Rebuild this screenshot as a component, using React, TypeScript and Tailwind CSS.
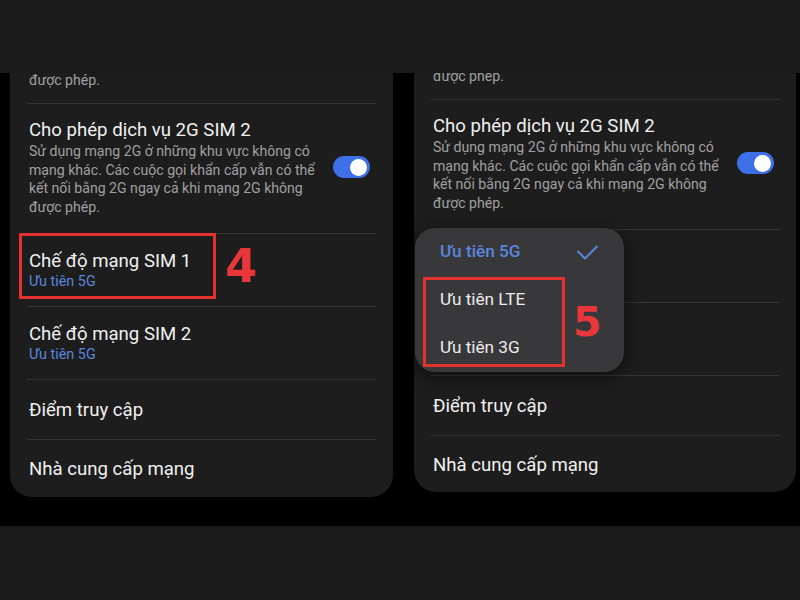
import React from "react";

function Divider() {
  return <div className="mx-[17px] h-px bg-[#353535]" />;
}

function Card({ shift, height, right }: { shift: string; height: string; right?: boolean }) {
  return (
    <div className={`relative overflow-hidden rounded-b-[22px] bg-[#1d1d1d] ${height} ${right ? "w-[382px]" : "w-[383px]"}`}>
      <div className={`${shift} h-[32px] pl-[19px] text-[14.1px] leading-[19px] text-[#a0a0a0]`}>được phép.</div>
      <Divider />
      <div className={`flex items-center pl-[19px] pt-[14px] pb-[16px] ${right ? "pr-[22px]" : "pr-[23px]"}`}>
        <div className="flex-1">
          <div className="text-[18.6px] leading-[24px] text-[#f0f0f0]">Cho phép dịch vụ 2G SIM 2</div>
          <div className="text-[14.1px] leading-[18.7px] text-[#a0a0a0] whitespace-nowrap">
            Sử dụng mạng 2G ở những khu vực không có
            <br />
            mạng khác. Các cuộc gọi khẩn cấp vẫn có thể
            <br />
            kết nối bằng 2G ngay cả khi mạng 2G không
            <br />
            được phép.
          </div>
        </div>
        <div className="flex h-[22px] w-[37px] items-center justify-end rounded-full bg-[#3d6fe6] pr-[3px]">
          <div className="h-[17px] w-[17px] rounded-full bg-white" />
        </div>
      </div>
      <Divider />
      <div className="pl-[19px] pt-[15px] pb-[15px]">
        <div className="text-[18.6px] leading-[24px] text-[#f0f0f0]">Chế độ mạng SIM 1</div>
        <div className="text-[14.4px] leading-[18px] text-[#5a86de]">Ưu tiên 5G</div>
      </div>
      <Divider />
      <div className="pl-[19px] pt-[15px] pb-[15px]">
        <div className="text-[18.6px] leading-[24px] text-[#f0f0f0]">Chế độ mạng SIM 2</div>
        <div className="text-[14.4px] leading-[18px] text-[#5a86de]">Ưu tiên 5G</div>
      </div>
      <Divider />
      <div className="pl-[19px] pt-[18px] pb-[17px]">
        <div className="text-[18.6px] leading-[24px] text-[#f0f0f0]">Điểm truy cập</div>
      </div>
      <Divider />
      <div className="pl-[19px] pt-[17px]">
        <div className="text-[18.6px] leading-[24px] text-[#f0f0f0]">Nhà cung cấp mạng</div>
      </div>

      {!right && (
        <>
          <div className="absolute left-[9px] top-[160px] h-[66px] w-[197px] border-[3px] border-[#e3312f]" />
          <div className="absolute left-[215px] top-[170px] font-['DejaVu_Sans',sans-serif] text-[46px] font-bold leading-none text-[#e8363a]">
            4
          </div>
        </>
      )}

      {right && (
        <>
          <div className="absolute left-[1px] top-[155px] h-[144px] w-[209px] rounded-[20px] bg-[#38383b] shadow-[0_4px_18px_rgba(0,0,0,0.55)]">
            <div className="flex h-[48px] items-center justify-between pl-[25px] pr-[26px]">
              <span className="text-[17.2px] font-medium text-[#5a86de]">Ưu tiên 5G</span>
              <svg width="21" height="15" viewBox="0 0 21 15" fill="none">
                <polyline points="1,6.5 8,13.5 20,1.5" stroke="#5a86de" strokeWidth="2" strokeLinecap="round" strokeLinejoin="round" />
              </svg>
            </div>
            <div className="flex h-[48px] items-center pl-[25px]">
              <span className="text-[17.2px] text-[#ececec]">Ưu tiên LTE</span>
            </div>
            <div className="flex h-[48px] items-center pl-[25px]">
              <span className="text-[17.2px] text-[#ececec]">Ưu tiên 3G</span>
            </div>
          </div>
          <div className="absolute left-[9px] top-[204px] h-[90px] w-[142px] border-[3px] border-[#e3312f]" />
          <div className="absolute left-[159px] top-[229px] font-['DejaVu_Sans',sans-serif] text-[41px] font-bold leading-none text-[#e8363a]">
            5
          </div>
        </>
      )}
    </div>
  );
}

export default function App() {
  return (
    <div className="flex h-[600px] w-[800px] flex-col bg-black font-['Roboto',sans-serif]">
      <div className="h-[73px] shrink-0 bg-[#1a1a1a]" />
      <div className="flex h-[453px] shrink-0 gap-[21px] pl-[10px]">
        <Card shift="-mt-[2px]" height="h-[424px]" />
        <Card shift="-mt-[6px]" height="h-[419px]" right />
      </div>
      <div className="h-[74px] shrink-0 bg-[#1a1a1a]" />
    </div>
  );
}
